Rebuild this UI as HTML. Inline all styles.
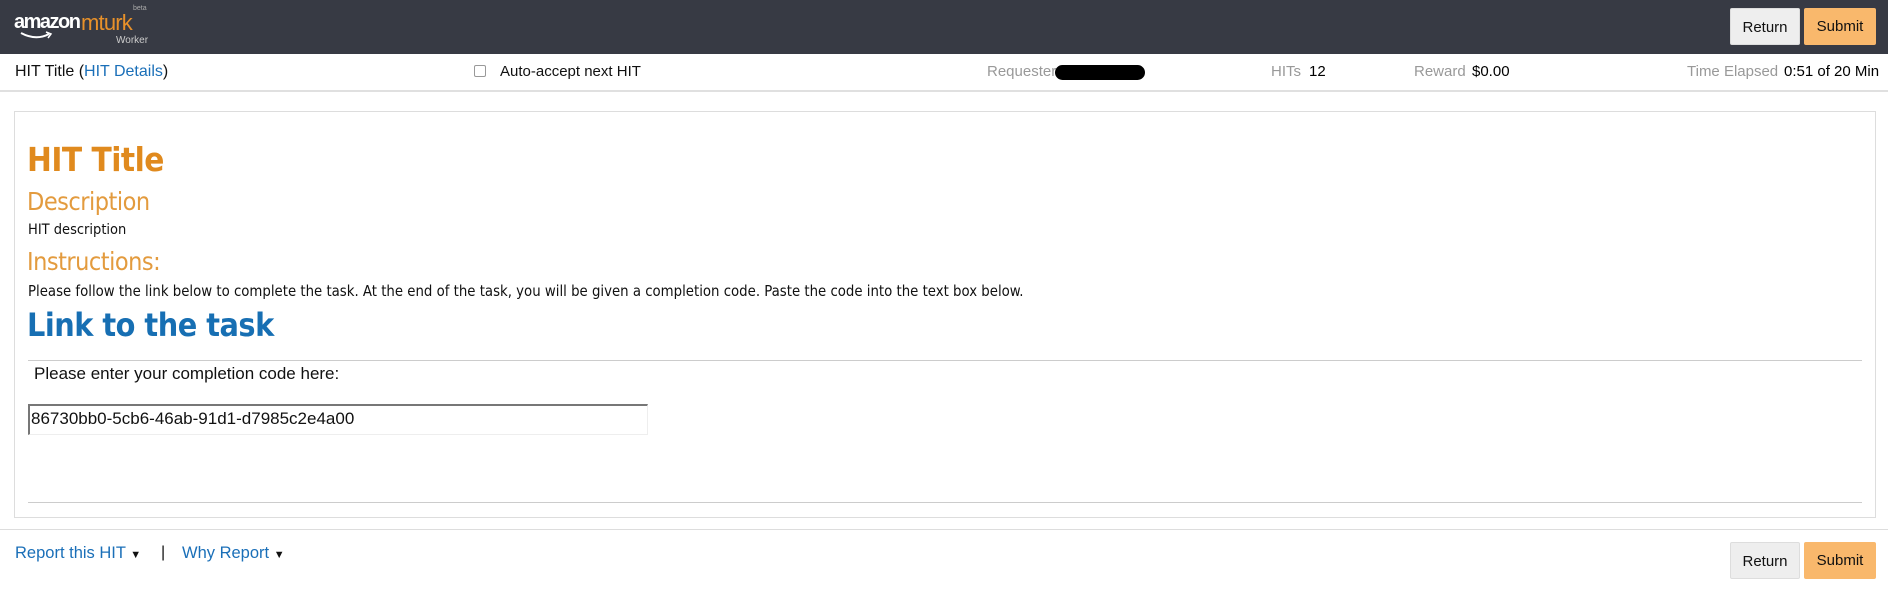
<!DOCTYPE html>
<html><head><style>
*{box-sizing:border-box;margin:0;padding:0}
body{width:1888px;height:597px;background:#fff;font-family:"Liberation Sans",sans-serif;position:relative;overflow:hidden}
.hdr{position:absolute;left:0;top:0;width:1888px;height:54px;background:#373a44}
.abs{position:absolute;white-space:nowrap}
.btn{position:absolute;height:37px;font-size:15px;line-height:37px;text-align:center;color:#111;border-radius:2px}
.ret{background:#eeeeee;border:1px solid #ddd}
.sub{background:#f9b86c}
.g{color:#999}
.blue{color:#1a6fb8}
.ember{font-family:"DejaVu Sans Condensed","DejaVu Sans",sans-serif}
</style></head><body>
<div class="hdr">
  <div class="abs" style="left:14px;top:11px;font-size:20px;font-weight:bold;color:#fff;letter-spacing:-1.5px">amazon</div>
  <div class="abs" style="left:81px;top:10px;font-size:22px;color:#e8912a;letter-spacing:-0.8px">mturk</div>
  <div class="abs" style="left:133px;top:5px;font-size:7px;color:#aaa">beta</div>
  <div class="abs" style="left:116px;top:35px;font-size:10px;color:#ccc">Worker</div>
  <svg class="abs" style="left:20px;top:31px" width="34" height="10"><path d="M1 2 Q16 10 29 3" stroke="#fff" stroke-width="2" fill="none"/><path d="M26 1 L31 3 L28 7" stroke="#fff" stroke-width="1.5" fill="none"/></svg>
  <div class="btn ret" style="left:1730px;top:8px;width:70px">Return</div>
  <div class="btn sub" style="left:1804px;top:8px;width:72px">Submit</div>
</div>
<div class="abs" style="left:15px;top:63px;font-size:16px;color:#111">HIT Title (<span class="blue">HIT Details</span>)</div>
<div class="abs" style="left:474px;top:65px;width:12px;height:12px;border:1px solid #999;border-radius:2px"></div>
<div class="abs" style="left:500px;top:63px;font-size:15px;color:#111">Auto-accept next HIT</div>
<div class="abs g" style="left:987px;top:63px;font-size:15px">Requester</div>
<div class="abs" style="left:1055px;top:65px;width:90px;height:15px;background:#000;border-radius:8px"></div>
<div class="abs g" style="left:1271px;top:63px;font-size:15px">HITs</div>
<div class="abs" style="left:1309px;top:63px;font-size:15px">12</div>
<div class="abs g" style="left:1414px;top:63px;font-size:15px">Reward</div>
<div class="abs" style="left:1472px;top:63px;font-size:15px">$0.00</div>
<div class="abs g" style="left:1687px;top:63px;font-size:15px">Time Elapsed</div>
<div class="abs" style="left:1784px;top:63px;font-size:15px">0:51 of 20 Min</div>
<div class="abs" style="left:0;top:90px;width:1888px;height:2px;background:#e0e0e0"></div>
<div class="abs" style="left:14px;top:111px;width:1862px;height:407px;border:1px solid #ddd"></div>
<div class="abs ember" style="left:27px;top:140px;font-size:33px;font-weight:bold;color:#e08a1e;letter-spacing:-0.5px">HIT Title</div>
<div class="abs ember" style="left:27px;top:187px;font-size:25px;color:#e39b3e;font-weight:200;letter-spacing:-0.5px">Description</div>
<div class="abs ember" style="left:28px;top:222px;font-size:14.5px;color:#111">HIT description</div>
<div class="abs ember" style="left:27px;top:247px;font-size:25px;color:#e39b3e;letter-spacing:-0.5px">Instructions:</div>
<div class="abs ember" style="left:28px;top:283px;font-size:14.8px;color:#111">Please follow the link below to complete the task. At the end of the task, you will be given a completion code. Paste the code into the text box below.</div>
<div class="abs ember" style="left:27px;top:306px;font-size:32px;font-weight:bold;color:#176fb3;letter-spacing:-0.5px">Link to the task</div>
<div class="abs" style="left:28px;top:360px;width:1834px;height:1px;background:#ccc"></div>
<div class="abs" style="left:34px;top:364px;font-size:17px;color:#111">Please enter your completion code here:</div>
<div class="abs" style="left:28px;top:404px;width:620px;height:31px;border:1px solid #eee;border-top:2px solid #777;border-left:2px solid #777"></div>
<div class="abs" style="left:31px;top:409px;font-size:17px;color:#111">86730bb0-5cb6-46ab-91d1-d7985c2e4a00</div>
<div class="abs" style="left:28px;top:502px;width:1834px;height:1px;background:#ccc"></div>
<div class="abs" style="left:0;top:529px;width:1888px;height:1px;background:#ddd"></div>
<div class="abs blue" style="left:15px;top:544px;font-size:16.5px">Report this HIT <span style="color:#111;font-size:11px">&#9660;</span></div>
<div class="abs" style="left:161px;top:544px;font-size:16px;color:#111">|</div>
<div class="abs blue" style="left:182px;top:544px;font-size:16.5px">Why Report <span style="color:#111;font-size:11px">&#9660;</span></div>
<div class="btn ret" style="left:1730px;top:542px;width:70px">Return</div>
<div class="btn sub" style="left:1804px;top:542px;width:72px">Submit</div>
</body></html>
